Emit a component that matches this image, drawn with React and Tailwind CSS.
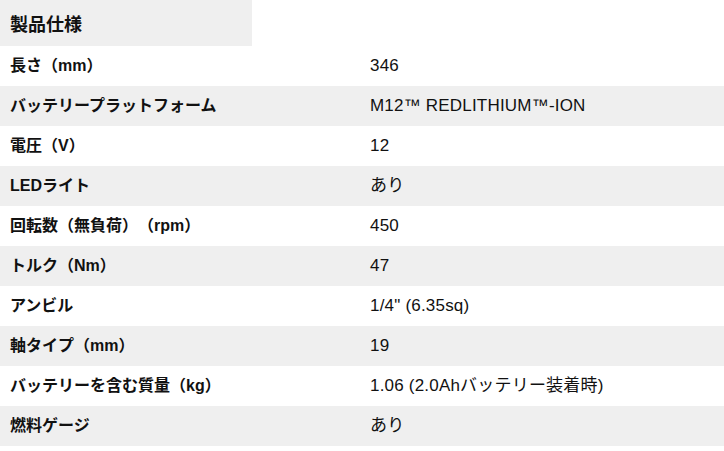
const specs = [
  ['長さ（mm）', '346'],
  ['バッテリープラットフォーム', 'M12™ REDLITHIUM™-ION'],
  ['電圧（V）', '12'],
  ['LEDライト', 'あり'],
  ['回転数（無負荷）（rpm）', '450'],
  ['トルク（Nm）', '47'],
  ['アンビル', '1/4" (6.35sq)'],
  ['軸タイプ（mm）', '19'],
  ['バッテリーを含む質量（kg）', '1.06 (2.0Ahバッテリー装着時)'],
  ['燃料ゲージ', 'あり'],
];

export default function App() {
  return (
    <div className="w-[724px] h-[451px] bg-white text-[#111] font-['Liberation_Sans','Noto_Sans_CJK_JP',sans-serif] [text-spacing-trim:space-all]">
      <div className="w-[252px] h-[46px] bg-[#efefef] flex items-center pl-[10px]">
        <h2 className="text-[18px] font-bold font-['Noto_Sans_CJK_JP',sans-serif]">製品仕様</h2>
      </div>
      <div>
        {specs.map(([label, value], i) => (
          <div
            key={label}
            className={`flex items-center h-10 ${i % 2 === 1 ? 'bg-[#efefef]' : 'bg-white'}`}
          >
            <div className="w-[360px] pl-[10px] text-[16px] font-bold">
              {label}
            </div>
            <div className="pl-[10px] text-[17px] tracking-[0.2px]">{value}</div>
          </div>
        ))}
      </div>
    </div>
  );
}
